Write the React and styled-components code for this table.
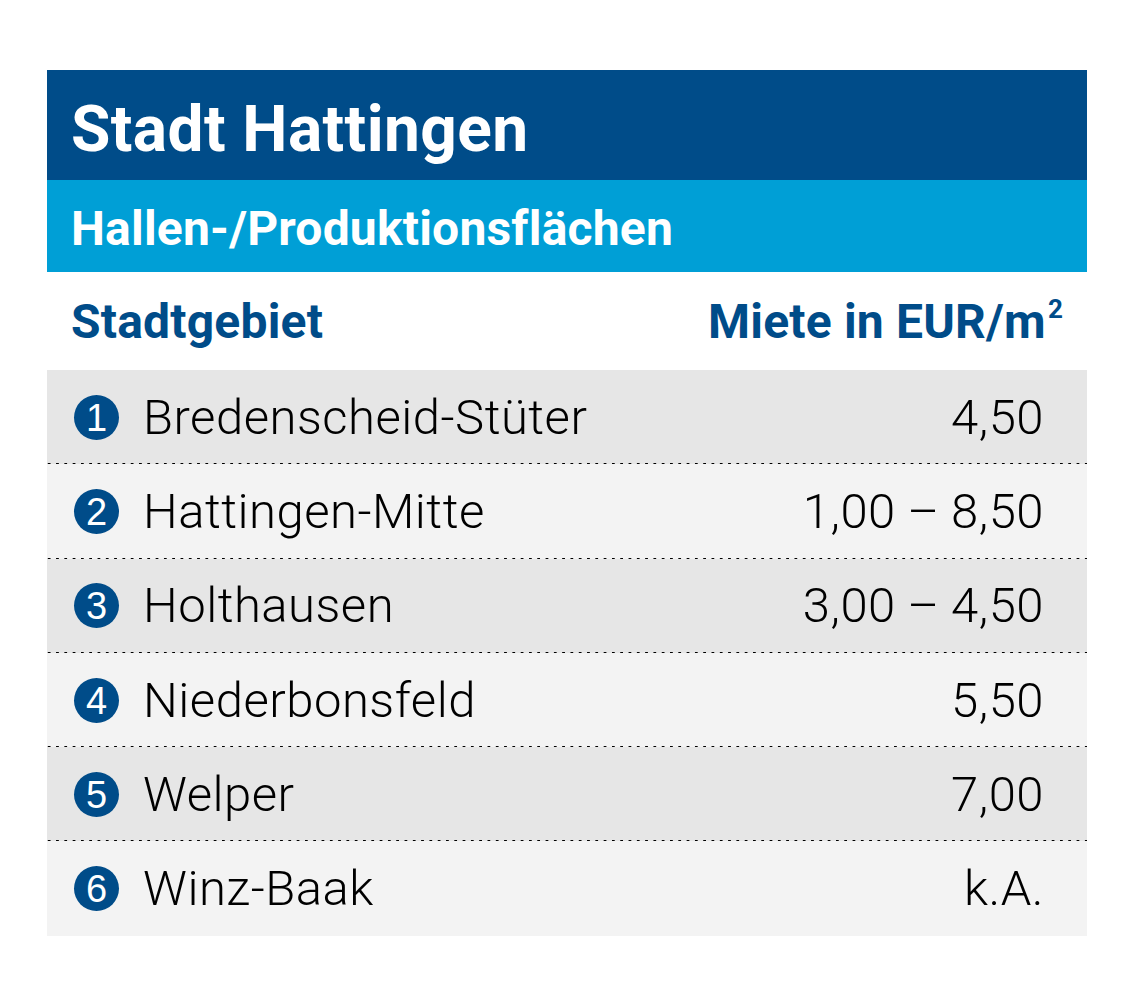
import React from "react";
import styled, { createGlobalStyle } from "styled-components";

const GlobalStyle = createGlobalStyle`
  body {
    margin: 0;
    background: #ffffff;
    font-family: Roboto, "Liberation Sans", sans-serif;
  }
`;

const rows = [
  { nr: 1, name: "Bredenscheid-Stüter", value: "4,50" },
  { nr: 2, name: "Hattingen-Mitte", value: "1,00 – 8,50" },
  { nr: 3, name: "Holthausen", value: "3,00 – 4,50" },
  { nr: 4, name: "Niederbonsfeld", value: "5,50" },
  { nr: 5, name: "Welper", value: "7,00" },
  { nr: 6, name: "Winz-Baak", value: "k.A." },
];

const App = () => {
  return (
    <Page>
      <GlobalStyle />
      <Card>
        <Title>Stadt Hattingen</Title>
        <Subtitle>Hallen-/Produktionsflächen</Subtitle>
        <HeadRow>
          <span>Stadtgebiet</span>
          <span>
            Miete in EUR/m<sup>2</sup>
          </span>
        </HeadRow>
        {rows.map((row, i) => (
          <Row key={row.nr} $odd={i % 2 === 0} $last={i === rows.length - 1}>
            <Name>
              <Badge>{row.nr}</Badge>
              {row.name}
            </Name>
            <Value>{row.value}</Value>
          </Row>
        ))}
      </Card>
    </Page>
  );
};

const Page = styled.div`
  width: 1134px;
  height: 989px;
  padding: 70px 47px 0;
  box-sizing: border-box;
`;

const Card = styled.div`
  width: 1040px;
  display: flex;
  flex-direction: column;
`;

const Title = styled.div`
  height: 110px;
  background: #004c89;
  color: #ffffff;
  font-size: 64px;
  font-weight: 700;
  letter-spacing: 0.4px;
  display: flex;
  align-items: center;
  padding: 0 24px;
  padding-top: 8px;
  box-sizing: border-box;
`;

const Subtitle = styled.div`
  height: 92px;
  background: #009fd6;
  color: #ffffff;
  font-size: 48px;
  font-weight: 700;
  letter-spacing: 0.2px;
  display: flex;
  align-items: center;
  padding: 0 24px;
  padding-top: 5px;
  box-sizing: border-box;
`;

const HeadRow = styled.div`
  height: 98px;
  display: flex;
  align-items: center;
  justify-content: space-between;
  padding: 0 24px 0 24px;
  padding-top: 1px;
  box-sizing: border-box;
  color: #004c89;
  font-size: 48px;
  font-weight: 700;
  letter-spacing: 0.2px;

  sup {
    font-size: 26px;
    vertical-align: 20px;
    line-height: 0;
    margin-left: 2px;
  }
`;

const Row = styled.div`
  height: 94.3px;
  position: relative;
  display: flex;
  align-items: center;
  justify-content: space-between;
  padding: 0 43px 0 27px;
  box-sizing: border-box;
  background: ${(p) => (p.$odd ? "#e6e6e6" : "#f3f3f3")};
  font-size: 49px;
  font-weight: 300;
  letter-spacing: 0.5px;
  color: #000000;

  &::after {
    content: "";
    display: ${(p) => (p.$last ? "none" : "block")};
    position: absolute;
    left: 0;
    right: 0;
    bottom: -1px;
    height: 2px;
    background-image: radial-gradient(circle, #000 0 1.2px, transparent 1.4px);
    background-size: 8.3px 2px;
    background-position: -2px 0;
  }
`;

const Name = styled.div`
  display: flex;
  align-items: center;
  gap: 24px;
`;

const Badge = styled.span`
  width: 45px;
  height: 45px;
  border-radius: 50%;
  background: #004c89;
  color: #ffffff;
  font-family: "Liberation Sans", Arial, sans-serif;
  font-size: 38px;
  font-weight: 400;
  letter-spacing: 0;
  display: flex;
  align-items: center;
  justify-content: center;
  line-height: 1;
  padding-top: 1px;
  box-sizing: border-box;
`;

const Value = styled.div`
  word-spacing: -1px;
`;

export default App;
